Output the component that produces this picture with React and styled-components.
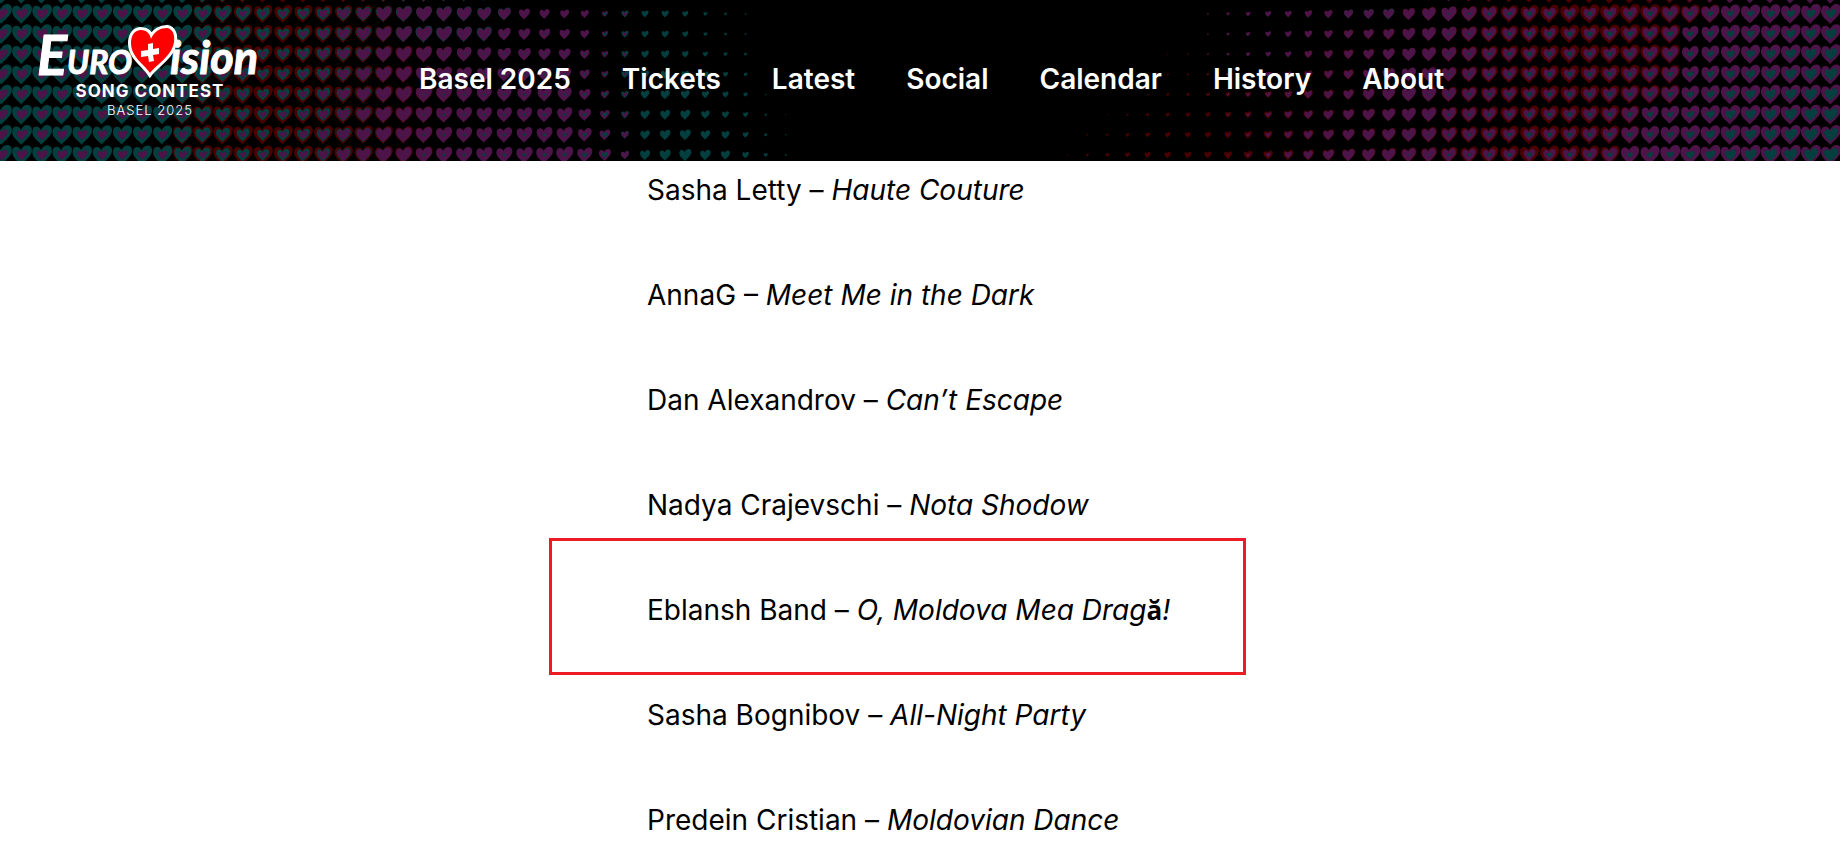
import React from "react";
import styled, { createGlobalStyle } from "styled-components";

const GlobalStyle = createGlobalStyle`
  * { box-sizing: border-box; }
  body {
    margin: 0;
    background: #fff;
    color: #000;
    font-family: Inter, "Liberation Sans", sans-serif;
  }
`;

const Page = styled.div`
  overflow: hidden;
`;

const Header = styled.header`
  display: grid;
  grid-template-columns: minmax(0, 1fr);
  height: 161px;
  margin-right: 2px;
  background: #000;
  overflow: hidden;
`;

const Pattern = styled.svg`
  grid-area: 1 / 1;
  width: 100%;
  height: 161px;
`;

const Bar = styled.div`
  grid-area: 1 / 1;
  position: relative;
  display: flex;
  align-items: flex-start;
  padding-left: 36px;
`;

const LogoLink = styled.a`
  flex: none;
  width: 240px;
  margin-top: 24px;
  color: #fff;
  text-decoration: none;
`;

const LogoArt = styled.svg`
  display: block;
  width: 240px;
  height: 96px;
  overflow: visible;
`;

const Nav = styled.nav`
  display: flex;
  gap: 51px;
  margin-left: 143px;
  padding-top: 62px;
`;

const NavLink = styled.a`
  color: #fff;
  font-size: 28px;
  line-height: 34px;
  font-weight: 600;
  white-space: nowrap;
  text-decoration: none;
`;

const Entries = styled.ul`
  width: 548px;
  max-width: 100%;
  margin: 0 auto;
  padding: 0;
  list-style: none;
`;

const Entry = styled.li`
  position: relative;
  height: 58px;
  margin-bottom: 47px;
  font-size: 28px;
  line-height: 58px;
  white-space: nowrap;
`;

const Highlight = styled.span`
  position: absolute;
  inset: -43px -51px -36px -98px;
  border: 3px solid #ed1c24;
`;

const FallbackLetter = styled.span`
  font-family: "Open Sans", "Liberation Sans", sans-serif;
  font-style: normal;
  font-weight: 700;
  font-size: 26px;
`;

const HEART =
  "M-.04 .5C-.14 .34-.5 .16-.5-.14C-.5-.34-.4-.43-.27-.42C-.17-.41-.1-.35-.06-.25C.01-.4.13-.5.27-.5C.42-.5.5-.39.5-.24C.5.06.12.3-.04.5Z";

// Heart widths per colour: for some rows, a list of [column, width] stops.
// Rows in between are interpolated.
const RED = {
  color: "#4b0000",
  rows: [
    [0, [[8, 0], [9, 19], [13, 18], [18, 17], [20, 16], [22, 14], [23, 0], [63, 0], [64, 7], [66, 9], [68, 11], [70, 14], [73, 17], [77, 19], [80, 20], [84, 19], [85, 18], [86, 0]]],
    [4, [[7, 0], [8, 20], [13, 19], [18, 18], [20, 17], [23, 14], [24, 0], [54, 0], [57, 3], [59, 4], [63, 8], [66, 11], [70, 15], [75, 18], [80, 19], [82, 19], [83, 0]]],
    [7, [[6, 0], [7, 20], [13, 19], [18, 18], [20, 17], [23, 14], [24, 0], [51, 0], [53, 3], [56, 6], [59, 7], [63, 10], [66, 13], [70, 16], [75, 19], [79, 19], [80, 18], [81, 0]]],
  ],
};

const TEAL = {
  color: "#033f3e",
  rows: [
    [0, [[-2, 20], [8, 19], [10, 16], [13, 12], [16, 14], [19, 16], [22, 15], [24, 13], [25, 0], [28, 0], [30, 7], [32, 7], [33, 6], [34, 4], [36, 2], [37, 0], [65, 0], [66, 9], [68, 11], [69, 0], [71, 2], [75, 5], [83, 5], [86, 7], [90, 10]]],
    [1, [[-2, 20], [8, 19], [10, 16], [13, 12], [16, 14], [18, 15], [20, 17], [21, 16], [23, 15], [24, 2], [28, 1], [30, 7], [32, 7], [33, 6], [34, 4], [36, 2], [37, 0], [69, 0], [71, 2], [75, 5], [83, 6], [86, 8], [90, 11]]],
    [2, [[-2, 20], [8, 19], [10, 15], [12, 12], [16, 14], [18, 15], [19, 1], [22, 2], [28, 2], [29, 3], [30, 7], [32, 8], [34, 5], [36, 3], [37, 0], [69, 0], [71, 2], [75, 5], [82, 5], [85, 8], [90, 12]]],
    [7, [[-2, 20], [7, 19], [9, 15], [12, 12], [16, 14], [18, 15], [19, 1], [20, 3], [27, 4], [29, 6], [31, 10], [33, 12], [35, 9], [37, 4], [39, 0], [68, 1], [75, 5], [79, 5], [82, 7], [85, 11], [90, 14]]],
  ],
};

const PURPLE = {
  color: "#4d1449",
  rows: [
    [0, [[-2, 11], [8, 10], [12, 6], [14, 7], [16, 11], [18, 14], [20, 15], [22, 14], [25, 11], [28, 8], [30, 4], [31, 0], [58, 0], [59, 2], [62, 6], [65, 8], [68, 10], [71, 15], [77, 12], [80, 14], [83, 16], [85, 19], [90, 20]]],
    [3, [[-2, 11], [8, 9], [12, 6], [14, 7], [16, 11], [18, 15], [20, 16], [24, 14], [27, 13], [28, 10], [29, 7], [30, 3], [31, 0], [58, 0], [60, 3], [63, 6], [66, 9], [69, 14], [71, 14], [77, 12], [80, 14], [83, 17], [85, 19], [90, 20]]],
    [7, [[-2, 11], [7, 9], [11, 6], [13, 7], [16, 12], [18, 15], [20, 16], [24, 16], [27, 17], [28, 15], [29, 12], [30, 8], [31, 0], [59, 0], [62, 5], [64, 9], [66, 12], [70, 14], [75, 12], [79, 15], [80, 18], [82, 20], [90, 20]]],
  ],
};

function interpolate(stops, at, valueOf) {
  if (at <= stops[0][0]) return valueOf(stops[0][1]);
  for (let i = 1; i < stops.length; i += 1) {
    const [end, next] = stops[i];
    if (at <= end) {
      const [start, previous] = stops[i - 1];
      const t = (at - start) / (end - start);
      return valueOf(previous) * (1 - t) + valueOf(next) * t;
    }
  }
  return valueOf(stops[stops.length - 1][1]);
}

function heartWidth(layer, row, col) {
  return interpolate(layer.rows, row, (stops) => interpolate(stops, col, (w) => w));
}

function HeartPattern() {
  const hearts = [];
  for (let row = -1; row < 8; row += 1) {
    for (let col = -1; col < 91; col += 1) {
      const sized = (layer) => ({ color: layer.color, w: heartWidth(layer, row, col) });
      const inner = [TEAL, PURPLE].map(sized).sort((a, b) => b.w - a.w);
      [sized(RED), ...inner]
        .filter(({ w }) => w > 1)
        .forEach(({ color, w }) => {
          hearts.push(
            <path
              key={`${row}/${col}/${color}`}
              d={HEART}
              fill={color}
              transform={`translate(${22 + col * 20.1} ${14 + row * 20.15}) scale(${w})`}
            />
          );
        });
    }
  }
  return (
    <Pattern viewBox="0 0 1840 161" preserveAspectRatio="xMidYMid slice" aria-hidden="true">
      {hearts}
    </Pattern>
  );
}

function Logo() {
  return (
    <LogoLink href="#home" aria-label="Eurovision Song Contest Basel 2025">
      <LogoArt viewBox="0 0 240 96">
        <g
          fill="#fff"
          stroke="#fff"
          strokeWidth="1"
          strokeLinejoin="round"
          fontFamily="Lato, sans-serif"
          fontStyle="italic"
          fontWeight="700"
        >
          <text x="1" y="51" fontSize="56">E</text>
          <text x="31" y="50" fontSize="32">URO</text>
          <text x="134" y="50" fontSize="45">ision</text>
        </g>
        <path
          d="M114 49C108 40 95 33 95 19C95 11 99 6 105 6C111 6 114 10 115 15C118 7 125 4 131 4C137 5 139 11 138 18C136 32 121 40 114 49Z"
          fill="none"
          stroke="#fff"
          strokeWidth="6"
        />
        <path
          d="M114 49C108 40 95 33 95 19C95 11 99 6 105 6C111 6 114 10 115 15C118 7 125 4 131 4C137 5 139 11 138 18C136 32 121 40 114 49Z"
          fill="#f00"
        />
        <path d="M112 20l5-1l0 6l6-1l0 6l-6 1l1 6l-5 1l-1-6l-7 1l0-6l7-1z" fill="#fff" />
        <g fill="#fff" fontFamily="Inter, sans-serif" textAnchor="middle">
          <text x="114" y="73" fontSize="17" fontWeight="700" letterSpacing="1">SONG CONTEST</text>
          <text x="114" y="91" fontSize="13" fontWeight="300" letterSpacing="1">BASEL 2025</text>
        </g>
      </LogoArt>
    </LogoLink>
  );
}

const NAV = ["Basel 2025", "Tickets", "Latest", "Social", "Calendar", "History", "About"];

const ENTRIES = [
  { artist: "Sasha Letty", song: "Haute Couture" },
  { artist: "AnnaG", song: "Meet Me in the Dark" },
  { artist: "Dan Alexandrov", song: "Can’t Escape" },
  { artist: "Nadya Crajevschi", song: "Nota Shodow" },
  {
    artist: "Eblansh Band",
    song: <>O, Moldova Mea Drag<FallbackLetter>ă</FallbackLetter>!</>,
    highlighted: true,
  },
  { artist: "Sasha Bognibov", song: "All-Night Party" },
  { artist: "Predein Cristian", song: "Moldovian Dance" },
];

export default function App() {
  return (
    <Page>
      <GlobalStyle />
      <Header>
        <HeartPattern />
        <Bar>
          <Logo />
          <Nav aria-label="Main">
            {NAV.map((label) => (
              <NavLink key={label} href="#">{label}</NavLink>
            ))}
          </Nav>
        </Bar>
      </Header>
      <main>
        <Entries>
          {ENTRIES.map(({ artist, song, highlighted }) => (
            <Entry key={artist}>
              {artist} – <em>{song}</em>
              {highlighted && <Highlight />}
            </Entry>
          ))}
        </Entries>
      </main>
    </Page>
  );
}
